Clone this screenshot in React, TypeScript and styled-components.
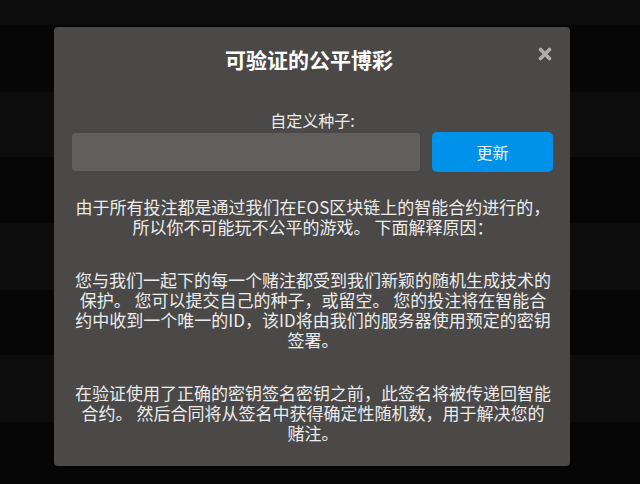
import React from "react";
import styled, { createGlobalStyle } from "styled-components";

const GlobalStyle = createGlobalStyle`
  html, body {
    margin: 0;
    padding: 0;
    background: #080808;
    overflow: hidden;
  }
  body {
    font-family: "Noto Sans CJK SC", "Noto Sans", sans-serif;
  }
  * { box-sizing: border-box; }
`;

const Page = styled.div`
  position: relative;
  width: 640px;
  height: 484px;
  overflow: hidden;
`;

const Backdrop = styled.div`
  display: flex;
  flex-direction: column;
`;

const BandRow = styled.div<{ $h: number; $light: boolean }>`
  height: ${(p) => p.$h}px;
  flex-shrink: 0;
  background: ${(p) => (p.$light ? "#0c0c0c" : "#060606")};
`;

const Overlay = styled.div`
  position: absolute;
  inset: 0;
  width: 624px;
  display: flex;
  justify-content: center;
  align-items: flex-start;
  padding-top: 27px;
`;

const Modal = styled.div`
  width: 516px;
  background: #4a4948;
  border-radius: 4px;
  padding: 0 17px 23px 18px;
  display: flex;
  flex-direction: column;
  position: relative;
  color: #ececec;
`;

const Header = styled.div`
  padding-top: 20px;
  display: flex;
  justify-content: center;
`;

const Title = styled.h2`
  margin: 0;
  padding-right: 7px;
  font-size: 21px;
  line-height: 25px;
  font-weight: 700;
  color: #ffffff;
`;

const Close = styled.button`
  position: absolute;
  top: 20px;
  right: 18px;
  width: 14px;
  height: 14px;
  padding: 0;
  border: 0;
  background: transparent;
  display: flex;
  cursor: pointer;
`;

const Label = styled.div`
  margin-top: 38px;
  text-align: center;
  font-size: 16px;
  line-height: 20px;
  color: #ececec;
`;

const SeedRow = styled.div`
  margin-top: 2px;
  display: flex;
  align-items: center;
  gap: 12px;
  height: 40px;
`;

const SeedInput = styled.input`
  flex: 1;
  height: 38px;
  border: 0;
  border-radius: 4px;
  background: #605f5e;
  outline: none;
  padding: 0 10px;
  color: #fff;
  font-size: 16px;
  font-family: inherit;
`;

const UpdateButton = styled.button`
  width: 121px;
  height: 40px;
  border: 0;
  border-radius: 5px;
  background: #0091ea;
  color: #f2f2f2;
  font-size: 16px;
  font-family: inherit;
  cursor: pointer;
`;

const Text = styled.p<{ $first?: boolean }>`
  margin: ${(p) => (p.$first ? "25px" : "33px")} 1px 0 2px;
  text-align: center;
  font-size: 17px;
  line-height: 20px;
  color: #ececec;
`;

const CloseIcon = () => (
  <svg width="14" height="14" viewBox="0 0 14 14">
    <path
      d="M2.5 2.5 L11.5 11.5 M11.5 2.5 L2.5 11.5"
      stroke="#aeaeae"
      strokeWidth="3.6"
      strokeLinecap="round"
    />
  </svg>
);

const bands: { h: number; light: boolean }[] = [
  { h: 25, light: true },
  { h: 67, light: false },
  { h: 65, light: true },
  { h: 66, light: false },
  { h: 67, light: true },
  { h: 65, light: false },
  { h: 67, light: true },
  { h: 62, light: false },
];

export default function App() {
  return (
    <Page>
      <GlobalStyle />
      <Backdrop>
        {bands.map((b, i) => (
          <BandRow key={i} $h={b.h} $light={b.light} />
        ))}
      </Backdrop>
      <Overlay>
        <Modal>
          <Header>
            <Title>可验证的公平博彩</Title>
          </Header>
          <Close aria-label="close">
            <CloseIcon />
          </Close>
          <Label>自定义种子:</Label>
          <SeedRow>
            <SeedInput type="text" />
            <UpdateButton>更新</UpdateButton>
          </SeedRow>
          <Text $first>
            由于所有投注都是通过我们在EOS区块链上的智能合约进行的，所以你不可能玩不公平的游戏。 下面解释原因：
          </Text>
          <Text>
            您与我们一起下的每一个赌注都受到我们新颖的随机生成技术的保护。 您可以提交自己的种子，或留空。 您的投注将在智能合约中收到一个唯一的ID，该ID将由我们的服务器使用预定的密钥签署。
          </Text>
          <Text>
            在验证使用了正确的密钥签名密钥之前，此签名将被传递回智能合约。 然后合同将从签名中获得确定性随机数，用于解决您的赌注。
          </Text>
        </Modal>
      </Overlay>
    </Page>
  );
}
